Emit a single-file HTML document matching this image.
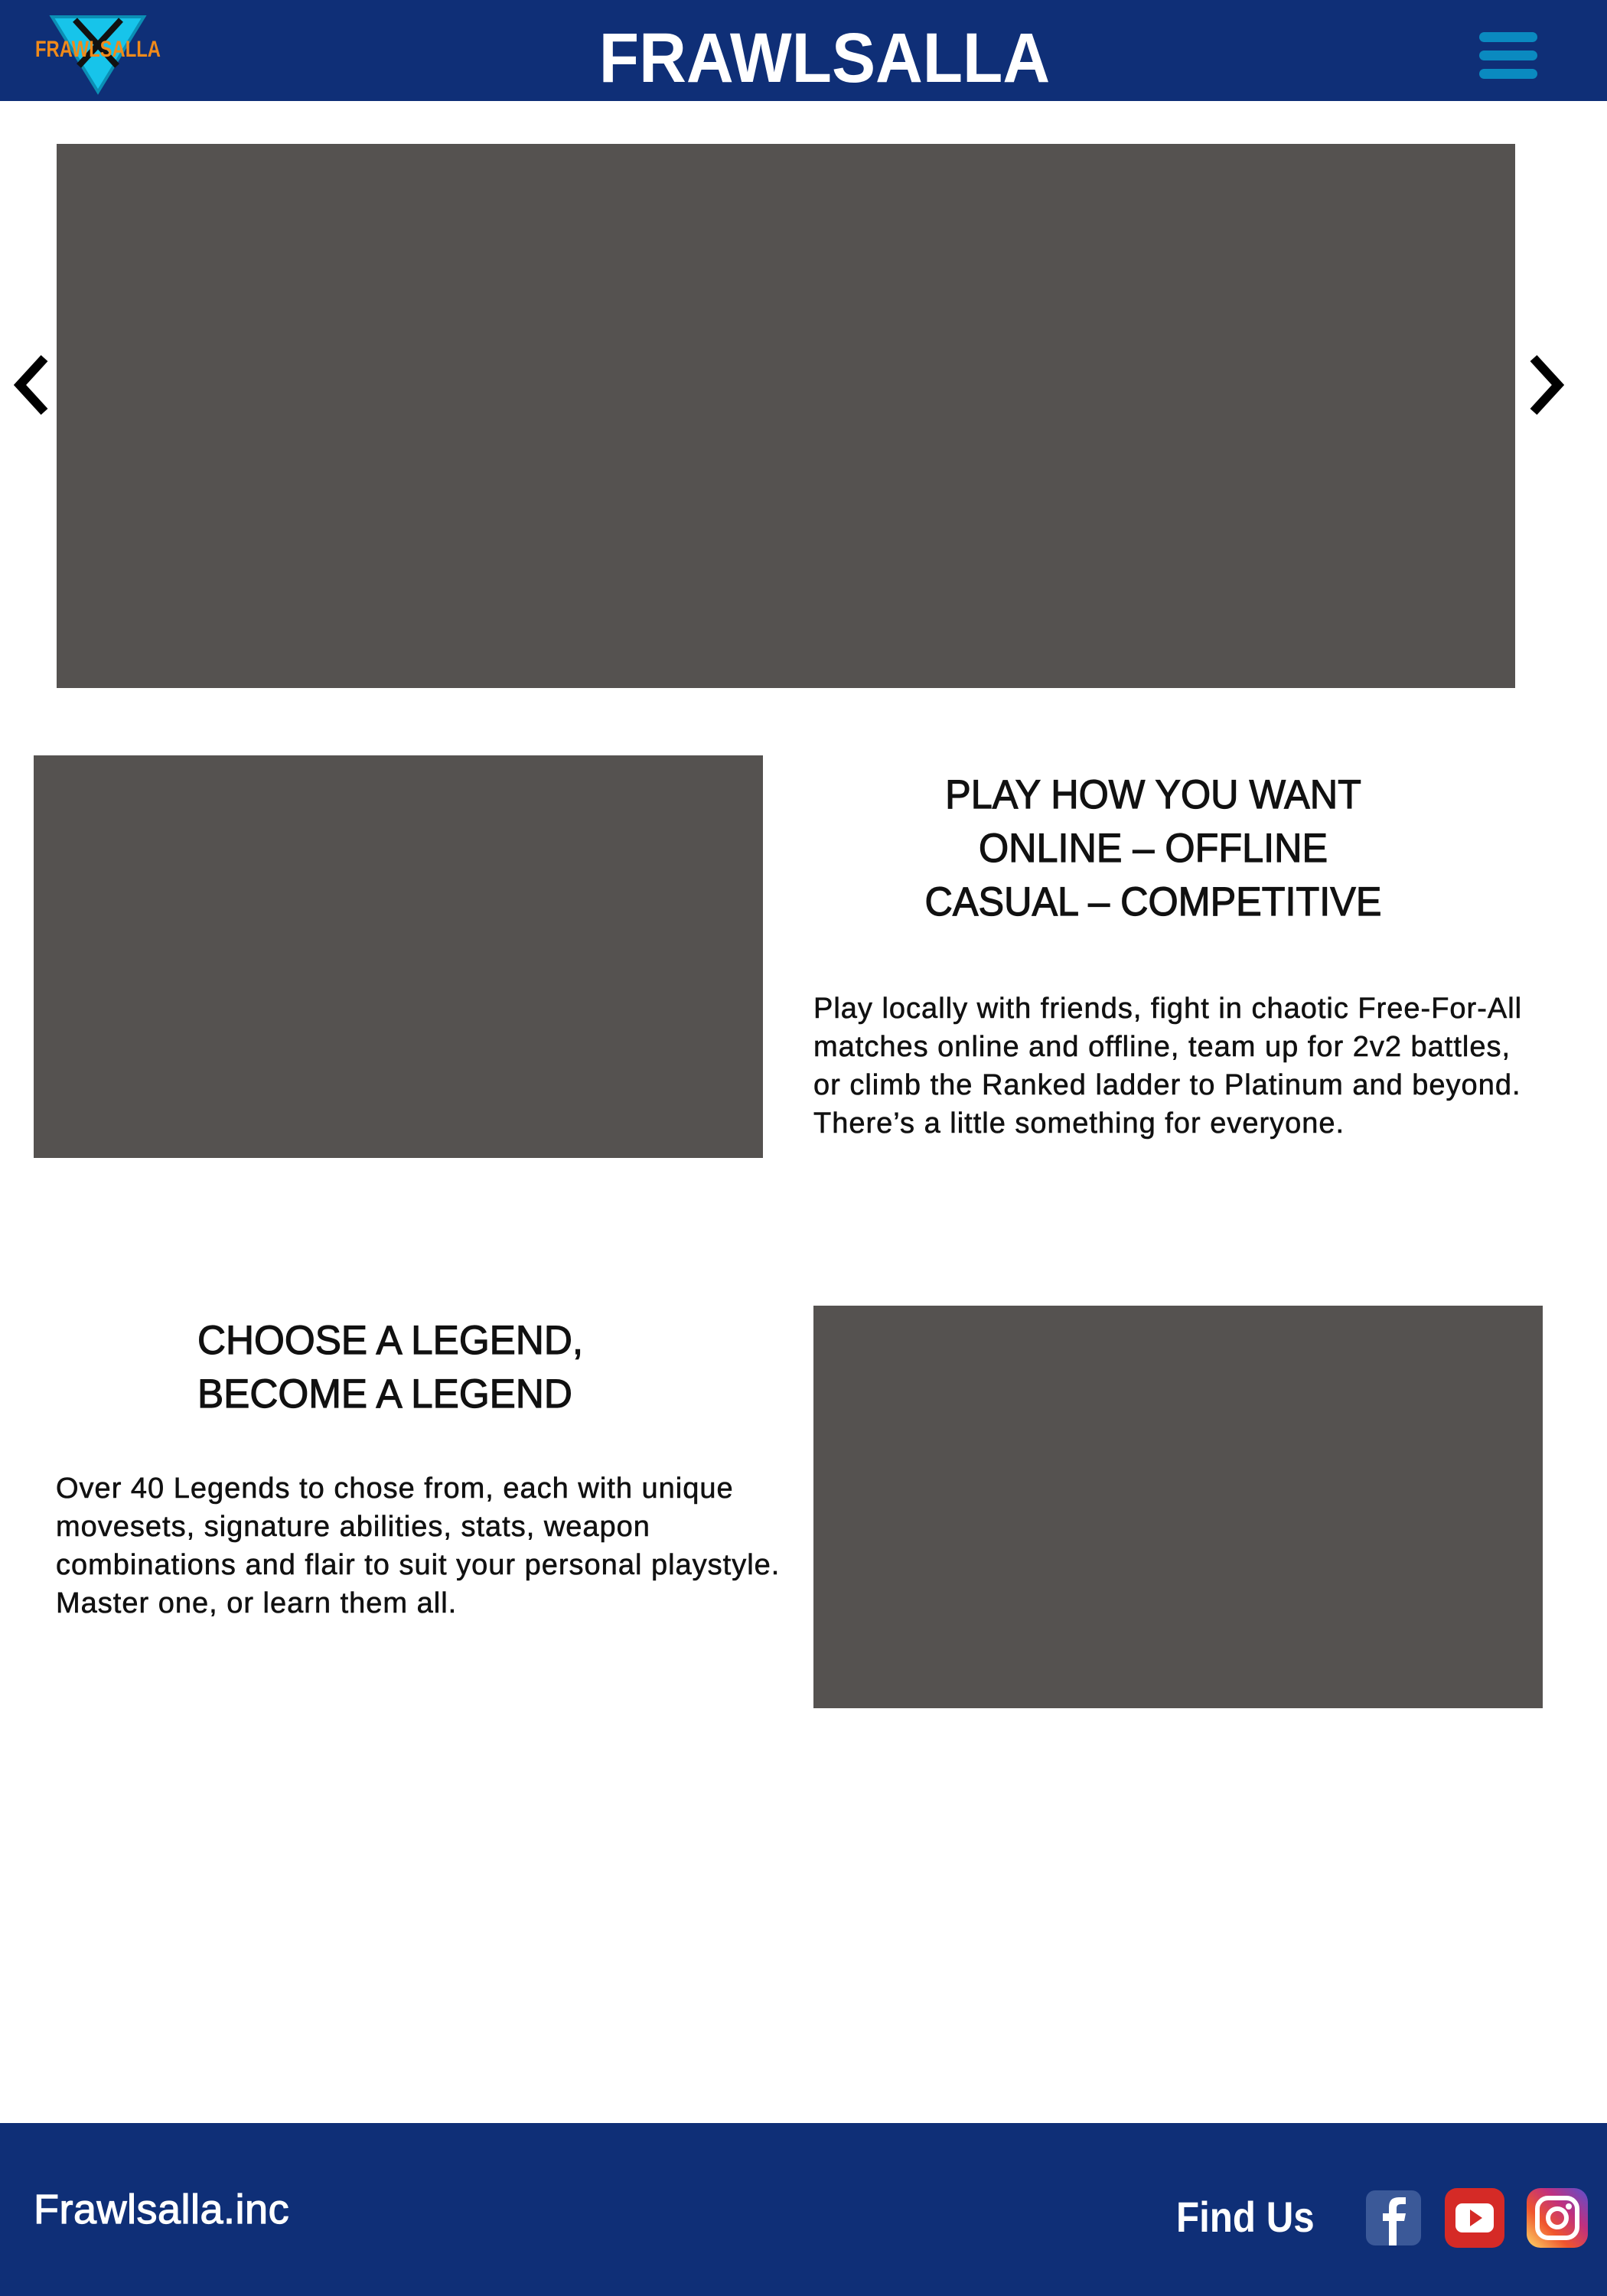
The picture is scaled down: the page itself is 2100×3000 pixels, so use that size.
<!DOCTYPE html>
<html><head><meta charset="utf-8"><style>
body{margin:0;width:2100px;height:3000px;position:relative;background:#fff;font-family:"Liberation Sans",sans-serif;overflow:hidden}
.a{position:absolute}
.box{position:absolute;background:#555250}
.hdr{left:0;top:0;width:2100px;height:132px;background:#0f2f77}
.bar{position:absolute;left:1933px;width:76px;height:13px;border-radius:7px;background:#0a8ac0}
.h{position:absolute;color:#111;font-size:53px;line-height:70px;text-align:center;white-space:nowrap;-webkit-text-stroke:1.2px #111}
.p{position:absolute;color:#111;font-size:38px;line-height:50px;white-space:nowrap;letter-spacing:1px;-webkit-text-stroke:0.6px #111}
</style></head><body>
<div class="a hdr"></div>
<svg class="a" style="left:28px;top:16px" width="190" height="110" viewBox="0 0 190 110">
<polygon points="40,6 160,6 100,104" fill="#17c4ea" stroke="#0b8fb5" stroke-width="4"/>
<path d="M70,10 L125,70 M130,10 L75,70" stroke="#111" stroke-width="8"/>
<text x="100" y="58" text-anchor="middle" font-family="Liberation Sans" font-weight="bold" font-size="30" fill="#f08a1a" textLength="164" lengthAdjust="spacingAndGlyphs">FRAWLSALLA</text>
</svg>
<div class="a" style="left:0;width:2155px;top:26px;text-align:center;color:#fff;font-weight:bold;font-size:92px;line-height:100px;transform:scaleX(0.93);transform-origin:1077px 0">FRAWLSALLA</div>
<div class="bar" style="top:42px"></div><div class="bar" style="top:66px"></div><div class="bar" style="top:90px"></div>
<div class="box" style="left:74px;top:188px;width:1906px;height:711px"></div>
<svg class="a" style="left:14px;top:460px" width="56" height="86"><path d="M44,8 L12,43 L44,78" fill="none" stroke="#000" stroke-width="12"/></svg>
<svg class="a" style="left:1992px;top:460px" width="56" height="86"><path d="M12,8 L44,43 L12,78" fill="none" stroke="#000" stroke-width="12"/></svg>
<div class="box" style="left:44px;top:987px;width:953px;height:526px"></div>
<div class="h" style="left:1107px;width:800px;top:1004px;transform:scaleX(0.95)">PLAY HOW YOU WANT<br>ONLINE – OFFLINE<br>CASUAL – COMPETITIVE</div>
<div class="p" style="left:1063px;top:1293px">Play locally with friends, fight in chaotic Free-For-All<br>matches online and offline, team up for 2v2 battles,<br>or climb the Ranked ladder to Platinum and beyond.<br>There’s a little something for everyone.</div>
<div class="h" style="left:258px;top:1717px;text-align:left;transform:scaleX(0.967);transform-origin:0 0">CHOOSE A LEGEND,<br>BECOME A LEGEND</div>
<div class="p" style="left:73px;top:1920px">Over 40 Legends to chose from, each with unique<br>movesets, signature abilities, stats, weapon<br>combinations and flair to suit your personal playstyle.<br>Master one, or learn them all.</div>
<div class="box" style="left:1063px;top:1706px;width:953px;height:526px"></div>
<div class="a" style="left:0;top:2774px;width:2100px;height:226px;background:#0f2f77"></div>
<div class="a" style="left:44px;top:2857px;color:#fff;font-size:54px;line-height:60px;letter-spacing:0.5px;-webkit-text-stroke:1.2px #fff">Frawlsalla.inc</div>
<div class="a" style="left:1537px;top:2866px;color:#fff;font-size:56px;line-height:62px;font-weight:bold;transform:scaleX(0.88);transform-origin:0 0">Find Us</div>
<svg class="a" style="left:1785px;top:2862px" width="72" height="72"><rect width="72" height="72" rx="12" fill="#3b5998"/><path d="M40,72 V40 H50 L52,30 H40 V23 Q40,18 46,18 H52 V9 H43 Q30,9 30,22 V30 H22 V40 H30 V72 Z" fill="#fff"/></svg>
<svg class="a" style="left:1888px;top:2859px" width="78" height="78"><rect width="78" height="78" rx="16" fill="#d52a26"/><rect x="14" y="20" width="50" height="38" rx="9" fill="#fff"/><path d="M33,28 L49,39 L33,50 Z" fill="#d52a26"/></svg>
<svg class="a" style="left:1995px;top:2859px" width="80" height="78"><defs><linearGradient id="g" x1="0" y1="1" x2="1" y2="0"><stop offset="0" stop-color="#fdd868"/><stop offset=".35" stop-color="#f0552d"/><stop offset=".65" stop-color="#c0307f"/><stop offset="1" stop-color="#5a51d0"/></linearGradient></defs><rect width="80" height="78" rx="18" fill="url(#g)"/><rect x="14" y="13" width="52" height="52" rx="14" fill="none" stroke="#fff" stroke-width="6"/><circle cx="40" cy="39" r="12" fill="none" stroke="#fff" stroke-width="6"/><circle cx="55" cy="24" r="4" fill="#fff"/></svg>
</body></html>
